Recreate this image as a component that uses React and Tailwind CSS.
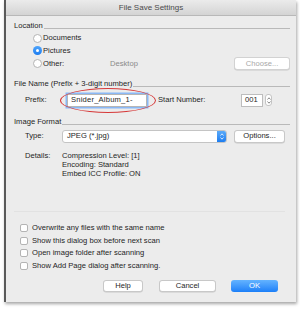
import React from 'react'

const font = { fontFamily: '"Liberation Sans", Arial, sans-serif' }

function SectionLabel({ children }) {
  return (
    <div className="flex items-center h-[12px] gap-[1px]">
      <span className="text-[#1e1e1e] leading-none">{children}</span>
      <div className="flex-1 mt-[5px] h-[2px] border-t border-[#b9b9b9] border-b-white" />
    </div>
  )
}

function Radio({ checked, label }) {
  return (
    <div className="flex items-center h-[12.5px] gap-[1px]">
      {checked ? (
        <div className="w-[9px] h-[9px] rounded-full bg-gradient-to-b from-[#4ea4fb] to-[#1a7cf0] flex items-center justify-center">
          <div className="w-[3px] h-[3px] rounded-full bg-white" />
        </div>
      ) : (
        <div className="w-[9px] h-[9px] rounded-full bg-white border border-[#b4b4b4]" />
      )}
      <span className="text-[#1e1e1e] leading-none">{label}</span>
    </div>
  )
}

function Check({ label }) {
  return (
    <div className="flex items-center h-[12.5px] gap-[4px]">
      <div className="w-[8px] h-[8px] rounded-[2px] bg-white border border-[#b4b4b4]" />
      <span className="text-[#1e1e1e] leading-none">{label}</span>
    </div>
  )
}

function Button({ children, className = '' }) {
  return (
    <div className={`h-[12px] flex items-center justify-center rounded-[3px] bg-white border border-[#c8c8c8] shadow-[0_0.5px_0.5px_rgba(0,0,0,0.15)] text-[#1e1e1e] leading-none ${className}`}>
      {children}
    </div>
  )
}

export default function App() {
  return (
    <div className="w-[300px] h-[309px] bg-white overflow-hidden text-[7.6px]" style={font}>
      <div className="ml-[4px] w-[292px] h-[302px] bg-[#ececec] border-l-2 border-[#5a5a5a] shadow-[1px_2px_3px_rgba(0,0,0,0.35)] flex flex-col relative">
        {/* title bar */}
        <div className="h-[16px] shrink-0 bg-gradient-to-b from-[#ebebeb] to-[#d4d4d4] border-b border-[#b8b8b8] flex items-center justify-center">
          <span className="text-[#4a4a4a] text-[8px] leading-none">File Save Settings</span>
        </div>

        <div className="flex flex-col pl-[8px] pr-[6px] pt-[4px]">
          <SectionLabel>Location</SectionLabel>
          <div className="flex flex-col pl-[19px]">
            <Radio label="Documents" />
            <Radio checked label="Pictures" />
            <div className="flex items-center">
              <div className="w-[77px]">
                <Radio label="Other:" />
              </div>
              <span className="text-[#8a8a8a] leading-none">Desktop</span>
              <div className="flex-1" />
              <Button className="w-[56px] h-[13px] text-[#a8a8a8] border-[#d2d2d2] bg-[#f5f5f5]">Choose...</Button>
            </div>
          </div>

          <div className="mt-[8px]">
            <SectionLabel>File Name (Prefix + 3-digit number)</SectionLabel>
          </div>
          <div className="flex items-center h-[14px] mt-[3px] pl-[11px]">
            <span className="w-[42px] text-[#1e1e1e] leading-none">Prefix:</span>
            <div className="relative w-[80px] h-[13px] bg-white border border-[#b6b6b6] shadow-[0_0_0_1.5px_#8ab8f5] flex items-center pl-[3px]">
              <span className="text-[#1e1e1e] leading-none tracking-[0.2px]">Snider_Album_1-</span>
              <div className="absolute -left-[8px] -top-[7px] w-[96px] h-[25px] rounded-[50%] border-[1.5px] border-[#d63838] pointer-events-none" />
            </div>
            <span className="ml-[11px] text-[#1e1e1e] leading-none">Start Number:</span>
            <div className="flex-1" />
            <div className="w-[22px] h-[13px] bg-white border border-[#bdbdbd] flex items-center pl-[3px]">
              <span className="text-[#1e1e1e] leading-none">001</span>
            </div>
            <div className="ml-[2px] mr-[18px] w-[7px] h-[12px] rounded-[3px] bg-white border border-[#c4c4c4] flex flex-col items-center justify-center gap-[1px]">
              <svg width="4" height="3" viewBox="0 0 4 3"><path d="M0.5 2.5 L2 0.8 L3.5 2.5" fill="none" stroke="#555" strokeWidth="0.7" /></svg>
              <svg width="4" height="3" viewBox="0 0 4 3"><path d="M0.5 0.5 L2 2.2 L3.5 0.5" fill="none" stroke="#555" strokeWidth="0.7" /></svg>
            </div>
          </div>

          <div className="mt-[9px]">
            <SectionLabel>Image Format</SectionLabel>
          </div>
          <div className="flex items-center h-[14px] mt-[1px] pl-[11px]">
            <span className="w-[37px] text-[#1e1e1e] leading-none">Type:</span>
            <div className="w-[165px] h-[13px] bg-white border border-[#c4c4c4] rounded-[3px] flex items-center overflow-hidden">
              <span className="flex-1 pl-[4px] text-[#1e1e1e] leading-none">JPEG (*.jpg)</span>
              <div className="w-[9px] h-full bg-gradient-to-b from-[#5aaaf9] to-[#1c7df0] flex flex-col items-center justify-center gap-[1px]">
                <svg width="4" height="3" viewBox="0 0 4 3"><path d="M0.5 2.5 L2 0.8 L3.5 2.5" fill="none" stroke="#fff" strokeWidth="0.8" /></svg>
                <svg width="4" height="3" viewBox="0 0 4 3"><path d="M0.5 0.5 L2 2.2 L3.5 0.5" fill="none" stroke="#fff" strokeWidth="0.8" /></svg>
              </div>
            </div>
            <Button className="ml-[7px] w-[51px] h-[13px]">Options...</Button>
          </div>

          <div className="flex mt-[8px] pl-[11px] mr-[5px] pb-[33px] border-b border-[#e2e2e2]">
            <span className="w-[37px] text-[#1e1e1e] leading-[9px]">Details:</span>
            <div className="flex flex-col text-[#1e1e1e] leading-[9px]">
              <span>Compression Level: [1]</span>
              <span>Encoding: Standard</span>
              <span>Embed ICC Profile: ON</span>
            </div>
          </div>

          <div className="flex flex-col pl-[6px] mt-[10px]">
            <Check label="Overwrite any files with the same name" />
            <Check label="Show this dialog box before next scan" />
            <Check label="Open image folder after scanning" />
            <Check label="Show Add Page dialog after scanning." />
          </div>

          <div className="flex items-center mt-[8px] pl-[89px]">
            <Button className="w-[40px]">Help</Button>
            <Button className="ml-[16px] w-[57px]">Cancel</Button>
            <div className="ml-[15px] w-[47px] h-[12px] rounded-[3px] bg-gradient-to-b from-[#63b3ff] to-[#1a7ff8] flex items-center justify-center text-white leading-none">OK</div>
          </div>
        </div>
      </div>
    </div>
  )
}
